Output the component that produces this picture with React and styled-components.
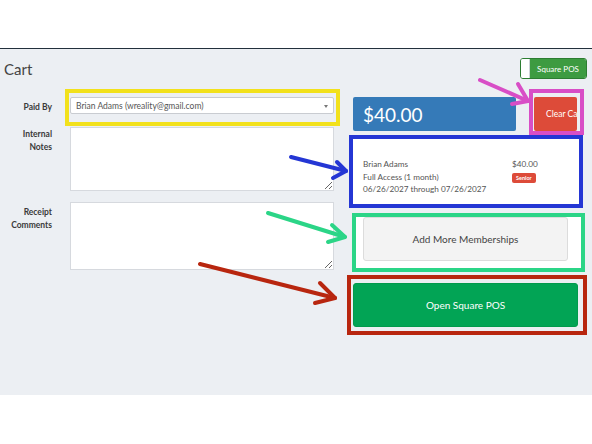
import React from "react";
import styled, { createGlobalStyle } from "styled-components";

const GlobalStyle = createGlobalStyle`
  html, body {
    margin: 0;
    padding: 0;
    background: #ffffff;
    font-family: "Lato", "Noto Sans", sans-serif;
  }
  * {
    box-sizing: border-box;
  }
`;

const Page = styled.div`
  position: relative;
  width: 592px;
  height: 444px;
  overflow: hidden;
  background: #ffffff;
`;

const TopBar = styled.div`
  height: 49px;
  background: #ffffff;
  border-bottom: 1px solid #22303c;
`;

const Content = styled.div`
  height: 346px;
  background: #eceff3;
  padding: 9px 5px 0 4px;
`;

const HeaderRow = styled.div`
  display: flex;
  align-items: center;
  justify-content: space-between;
  height: 21px;
`;

const Title = styled.h1`
  margin: 0;
  font-size: 15px;
  font-weight: 400;
  color: #444;
`;

const Toggle = styled.div`
  display: flex;
  width: 67px;
  height: 21px;
  border: 1px solid #2c7d31;
  border-radius: 3px;
  overflow: hidden;
`;

const ToggleKnob = styled.span`
  width: 9px;
  background: #ffffff;
  border-right: 1px solid #cfd3d8;
`;

const ToggleLabel = styled.span`
  flex: 1;
  display: flex;
  align-items: center;
  justify-content: center;
  background: #3d9b41;
  color: #ffffff;
  font-size: 8px;
`;

const Columns = styled.div`
  display: flex;
  gap: 7px;
  margin-top: 10px;
`;

const FormColumn = styled.div`
  width: 336px;
  display: flex;
  flex-direction: column;
`;

const FormRow = styled.div`
  display: flex;
  align-items: ${({ $center }) => ($center ? "center" : "flex-start")};
  margin-top: ${({ $gap }) => $gap || 0}px;
`;

const Label = styled.label`
  width: 61px;
  padding: ${({ $top }) => $top || 0}px 13px 0 0;
  text-align: right;
  font-size: 8.5px;
  line-height: 12.5px;
  font-weight: 700;
  color: #3a3a3a;
`;

const Frame = styled.div`
  border: 4px solid ${({ $color }) => $color};
  background: ${({ $fill }) => $fill || "transparent"};
  padding: ${({ $pad }) => $pad};
  margin-left: ${({ $left }) => $left || 0}px;
  margin-top: ${({ $top }) => $top || 0}px;
  width: ${({ $width }) => $width}px;
`;

const Select = styled.div`
  position: relative;
  height: 17px;
  width: 264px;
  background: #ffffff;
  border: 1px solid #c9ccd1;
  border-radius: 2px;
  padding-left: 5px;
  display: flex;
  align-items: center;
  font-size: 8.5px;
  color: #555;
`;

const Caret = styled.span`
  position: absolute;
  right: 5px;
  top: 7px;
  border-left: 2.5px solid transparent;
  border-right: 2.5px solid transparent;
  border-top: 3px solid #777;
`;

const TextArea = styled.textarea`
  display: block;
  margin-left: 5px;
  width: 264px;
  height: ${({ $h }) => $h}px;
  border: 1px solid #d6d9de;
  border-radius: 0;
  background: #ffffff;
  font-family: inherit;
`;

const SideColumn = styled.div`
  width: 240px;
  display: flex;
  flex-direction: column;
`;

const TotalRow = styled.div`
  display: flex;
  align-items: flex-start;
`;

const TotalBox = styled.div`
  margin: 8px 0 0 6px;
  width: 163px;
  height: 34px;
  background: #357ab8;
  border-radius: 2px;
  color: #ffffff;
  font-size: 19px;
  padding-left: 10px;
  display: flex;
  align-items: center;
`;

const ClearButton = styled.button`
  width: 43px;
  height: 34px;
  padding: 0 0 0 12px;
  border: none;
  border-radius: 2px;
  background: #dd4b39;
  color: #ffffff;
  font-family: inherit;
  font-size: 8.5px;
  white-space: nowrap;
  overflow: hidden;
  text-align: left;
`;

const ItemGrid = styled.div`
  display: grid;
  grid-template-columns: 1fr 67px;
  font-size: 8.2px;
  line-height: 12.5px;
  color: #555;
`;

const Badge = styled.span`
  display: inline-block;
  margin-top: 2px;
  padding: 0 4px;
  height: 10px;
  line-height: 10px;
  border-radius: 2px;
  background: #dd4b39;
  color: #ffffff;
  font-size: 5.5px;
  font-weight: 700;
`;

const ActionButton = styled.button`
  display: block;
  width: ${({ $width }) => $width}px;
  height: 44px;
  border-radius: 3px;
  font-family: inherit;
  font-size: 10px;
  border: 1px solid ${({ $primary }) => ($primary ? "#029a4c" : "#dcdcdc")};
  background: ${({ $primary }) => ($primary ? "#02a455" : "#f3f3f3")};
  color: ${({ $primary }) => ($primary ? "#ffffff" : "#444")};
`;

const Overlay = styled.svg`
  position: absolute;
  left: 0;
  top: 0;
  pointer-events: none;
`;

const arrows = [
  { color: "#d84ec6", line: [480, 80, 528, 101], head: [[518, 84], [512, 104]] },
  { color: "#2436d4", line: [291, 157, 346, 171], head: [[337, 162], [333, 178]] },
  { color: "#2bd587", line: [268, 213, 345, 237], head: [[332, 225], [328, 242]] },
  { color: "#b8260f", line: [200, 264, 335, 298], head: [[320, 283], [315, 303]] },
];

function Arrows() {
  return (
    <Overlay width="592" height="444" viewBox="0 0 592 444">
      {arrows.map((a, i) => {
        const [x1, y1, x2, y2] = a.line;
        return (
          <g key={i} stroke={a.color} strokeWidth="4" strokeLinecap="round" fill="none">
            <line x1={x1} y1={y1} x2={x2} y2={y2} />
            <polyline
              points={`${a.head[0][0]},${a.head[0][1]} ${x2},${y2} ${a.head[1][0]},${a.head[1][1]}`}
              strokeLinejoin="round"
            />
          </g>
        );
      })}
    </Overlay>
  );
}

export default function App() {
  return (
    <Page>
      <GlobalStyle />
      <TopBar />
      <Content>
        <HeaderRow>
          <Title>Cart</Title>
          <Toggle>
            <ToggleKnob />
            <ToggleLabel>Square POS</ToggleLabel>
          </Toggle>
        </HeaderRow>
        <Columns>
          <FormColumn>
            <FormRow $center>
              <Label>Paid By</Label>
              <Frame $color="#f2e11c" $width={275} $pad="4px 2px 8px 1px">
                <Select>
                  Brian Adams (wreality@gmail.com)
                  <Caret />
                </Select>
              </Frame>
            </FormRow>
            <FormRow $gap={1}>
              <Label $top={1}>
                Internal
                <br />
                Notes
              </Label>
              <TextArea $h={64} />
            </FormRow>
            <FormRow $gap={11}>
              <Label $top={4}>
                Receipt
                <br />
                Comments
              </Label>
              <TextArea $h={68} />
            </FormRow>
          </FormColumn>
          <SideColumn>
            <TotalRow>
              <TotalBox>$40.00</TotalBox>
              <Frame $color="#d84ec6" $width={55} $left={13} $pad="4px 3px 0 1px">
                <ClearButton>Clear Cart</ClearButton>
              </Frame>
            </TotalRow>
            <Frame $color="#2436d4" $fill="#ffffff" $width={234} $left={2} $pad="19px 0 8px 10px">
              <ItemGrid>
                <span>Brian Adams</span>
                <span>$40.00</span>
                <span>Full Access (1 month)</span>
                <span>
                  <Badge>Senior</Badge>
                </span>
                <span>06/26/2027 through 07/26/2027</span>
                <span />
              </ItemGrid>
            </Frame>
            <Frame $color="#2bd587" $fill="#ffffff" $width={233} $left={5} $top={5} $pad="0 0 7px 7px">
              <ActionButton $width={205}>Add More Memberships</ActionButton>
            </Frame>
            <Frame $color="#b8260f" $width={240} $top={3} $pad="4px 0 4px 2px">
              <ActionButton $primary $width={225}>
                Open Square POS
              </ActionButton>
            </Frame>
          </SideColumn>
        </Columns>
      </Content>
      <Arrows />
    </Page>
  );
}
